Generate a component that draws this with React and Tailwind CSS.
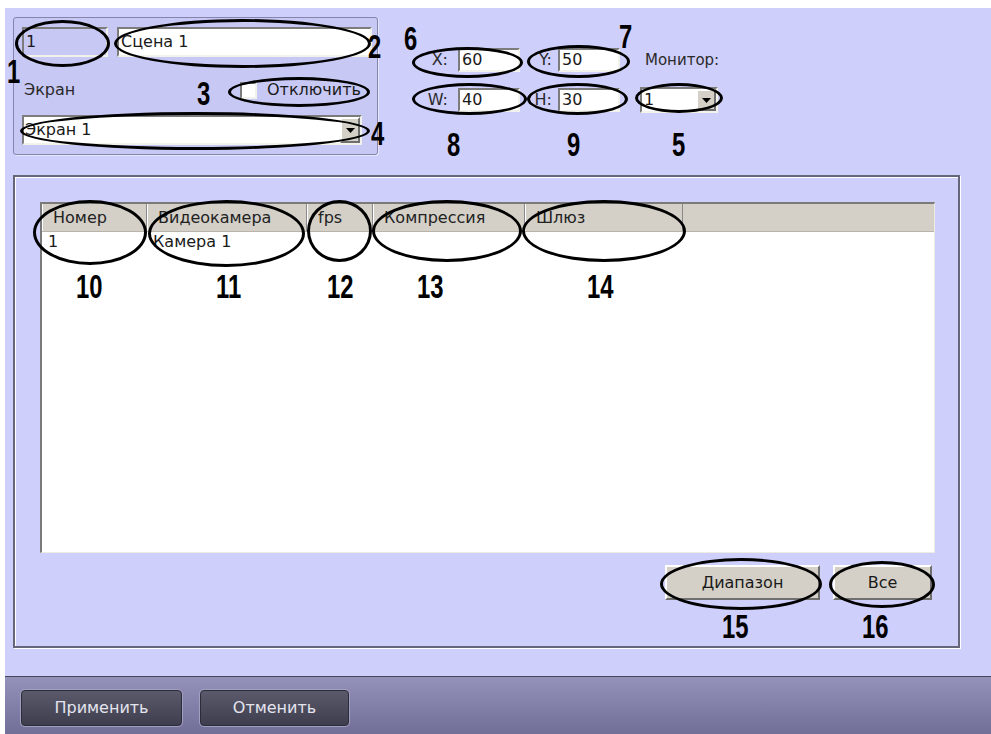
import React from 'react';

// Вкладка "Сцена": поля, таблица камер и пронумерованные выноски поверх
const ui = "font-['DejaVu_Sans',sans-serif] text-[16px] text-[#1a1a1a]";

const sunken =
  'border-2 border-t-[#7c7c7c] border-l-[#7c7c7c] border-b-[#f2f2ec] border-r-[#f2f2ec]';

const raised =
  'border-2 border-t-[#ffffff] border-l-[#ffffff] border-b-[#6f6f6f] border-r-[#6f6f6f] bg-[#d4d0c8]';

const Arrow = () => (
  <div className={`w-[20px] h-full flex items-center justify-center ${raised}`}>
    <svg width="9" height="5" viewBox="0 0 9 5">
      <path d="M0 0h9L4.5 5z" fill="#000" />
    </svg>
  </div>
);

const Ring = ({ className }) => (
  <div className={`absolute border-[3px] border-black rounded-[50%] ${className}`} />
);

const Num = ({ className, children }) => (
  <div
    className={`absolute font-['Liberation_Sans',sans-serif] font-bold text-[34px] leading-none text-black scale-x-[0.7] origin-top-left ${className}`}
  >
    {children}
  </div>
);

const columns = [
  { title: 'Номер', w: 'w-[105px]', value: '1' },
  { title: 'Видеокамера', w: 'w-[160px]', value: 'Камера 1' },
  { title: 'fps', w: 'w-[66px]', value: '' },
  { title: 'Компрессия', w: 'w-[152px]', value: '' },
  { title: 'Шлюз', w: 'w-[158px]', value: '' },
];

export default function App() {
  return (
    <div className={`relative w-[991px] h-[734px] overflow-hidden bg-white pl-[5px] pt-[8px] flex flex-col ${ui}`}>
      <div className="flex-1 bg-[#cfcffb] pl-[8px] pt-[9px] flex flex-col">
        {/* верхняя часть */}
        <div className="flex h-[138px]">
          <div className="w-[365px] h-[138px] border border-[#8484ac] rounded-[3px] bg-[#c8c8f4] pl-[8px] pt-[9px] shadow-[1px_1px_0_#e6e6ff]">
            <div className="flex">
              <div className={`w-[86px] h-[30px] bg-[#c8c8f4] flex items-center pl-[2px] ${sunken}`}>1</div>
              <div className={`ml-[9px] w-[255px] h-[30px] bg-white flex items-center pl-[2px] ${sunken}`}>Сцена 1</div>
            </div>
            <div className="flex items-center h-[24px] mt-[21px]">
              <span className="w-[218px] pl-[2px] text-[#2a2a2a]">Экран</span>
              <div className={`w-[17px] h-[17px] bg-white ${sunken}`} />
              <span className="ml-[10px]">Отключить</span>
            </div>
            <div className={`mt-[13px] w-[340px] h-[30px] bg-white flex items-center ${sunken}`}>
              <span className="flex-1 pl-[1px]">Экран 1</span>
              <Arrow />
            </div>
          </div>

          <div className="ml-[42px] pt-[31px]">
            <div className="flex items-center h-[24px]">
              <span className="w-[30px] pr-[2px] text-right text-[#2a2a2a]">X:</span>
              <div className={`ml-[8px] w-[62px] h-[24px] bg-white flex items-center pl-[2px] ${sunken}`}>60</div>
              <span className="w-[38px] pr-[6px] text-right text-[#2a2a2a]">Y:</span>
              <div className={`w-[62px] h-[24px] bg-white flex items-center pl-[2px] ${sunken}`}>50</div>
              <span className="ml-[25px] text-[15px] text-[#2a2a2a]">Монитор:</span>
            </div>
            <div className="flex items-center h-[24px] mt-[16px]">
              <span className="w-[30px] pr-[2px] text-right text-[#2a2a2a]">W:</span>
              <div className={`ml-[8px] w-[62px] h-[24px] bg-white flex items-center pl-[2px] ${sunken}`}>40</div>
              <span className="w-[38px] pr-[6px] text-right text-[#2a2a2a]">H:</span>
              <div className={`w-[62px] h-[24px] bg-white flex items-center pl-[2px] ${sunken}`}>30</div>
              <div className={`ml-[20px] w-[78px] h-[26px] bg-white flex items-center ${sunken}`}>
                <span className="flex-1 pl-[2px]">1</span>
                <Arrow />
              </div>
            </div>
          </div>
        </div>

        {/* таблица камер */}
        <div className="mt-[20px] w-[947px] h-[473px] border-2 border-[#66667a] shadow-[inset_1px_1px_0_#ffffff,1px_1px_0_#ffffff] pl-[25px] pt-[25px]">
          <div className="w-[895px] h-[351px] bg-white border-t-2 border-l-2 border-[#7a7a7a] border-b border-r border-b-[#ecece4] border-r-[#ecece4] flex flex-col">
            <div className="flex h-[28px] bg-[#d4d0c8] border-b border-[#b8b4ac]">
              {columns.map((c) => (
                <div
                  key={c.title}
                  className={`${c.w} h-full flex items-center pl-[11px] border-r border-[#8a8a8a] shadow-[inset_1px_0_0_#ffffff] text-[#222]`}
                >
                  {c.title}
                </div>
              ))}
              <div className="flex-1" />
            </div>
            <div className="flex h-[19px] items-center">
              {columns.map((c) => (
                <div key={c.title} className={`${c.w} pl-[6px] leading-none`}>
                  {c.value}
                </div>
              ))}
            </div>
          </div>
          <div className="w-[895px] flex justify-end pr-[3px] mt-[12px] gap-[13px]">
            <div className={`w-[155px] h-[35px] flex items-center justify-center ${raised}`}>Диапазон</div>
            <div className={`w-[99px] h-[35px] flex items-center justify-center ${raised}`}>Все</div>
          </div>
        </div>
      </div>

      {/* нижняя панель */}
      <div className="h-[58px] border-t border-[#46465a] bg-gradient-to-b from-[#9492ba] to-[#716f98] flex items-start pt-[13px] pl-[16px] gap-[18px]">
        <div className="w-[161px] h-[36px] rounded-[4px] border border-[#2c2c38] bg-gradient-to-b from-[#5a5a6c] to-[#3e3e4e] flex items-center justify-center text-[#e4e4ee] shadow-[0_0_0_1px_#a0a0c0]">
          Применить
        </div>
        <div className="w-[149px] h-[36px] rounded-[4px] border border-[#2c2c38] bg-gradient-to-b from-[#5a5a6c] to-[#3e3e4e] flex items-center justify-center text-[#e4e4ee] shadow-[0_0_0_1px_#a0a0c0]">
          Отменить
        </div>
      </div>

      {/* выноски */}
      <Ring className="left-[15px] top-[20px] w-[95px] h-[47px]" />
      <Ring className="left-[114px] top-[19px] w-[257px] h-[49px]" />
      <Ring className="left-[228px] top-[77px] w-[142px] h-[30px]" />
      <Ring className="left-[20px] top-[112px] w-[350px] h-[38px]" />
      <Ring className="left-[412px] top-[47px] w-[111px] h-[31px]" />
      <Ring className="left-[527px] top-[45px] w-[103px] h-[33px]" />
      <Ring className="left-[412px] top-[83px] w-[115px] h-[32px]" />
      <Ring className="left-[527px] top-[83px] w-[101px] h-[32px]" />
      <Ring className="left-[635px] top-[83px] w-[88px] h-[30px]" />
      <Ring className="left-[33px] top-[200px] w-[114px] h-[65px]" />
      <Ring className="left-[148px] top-[200px] w-[157px] h-[67px]" />
      <Ring className="left-[307px] top-[200px] w-[65px] h-[62px]" />
      <Ring className="left-[372px] top-[200px] w-[150px] h-[62px]" />
      <Ring className="left-[522px] top-[200px] w-[164px] h-[62px]" />
      <Ring className="left-[660px] top-[558px] w-[162px] h-[52px]" />
      <Ring className="left-[829px] top-[561px] w-[106px] h-[47px]" />

      <Num className="left-[7px] top-[54px]">1</Num>
      <Num className="left-[368px] top-[29px]">2</Num>
      <Num className="left-[197px] top-[76px]">3</Num>
      <Num className="left-[371px] top-[116px]">4</Num>
      <Num className="left-[404px] top-[21px]">6</Num>
      <Num className="left-[619px] top-[19px]">7</Num>
      <Num className="left-[447px] top-[127px]">8</Num>
      <Num className="left-[567px] top-[127px]">9</Num>
      <Num className="left-[672px] top-[127px]">5</Num>
      <Num className="left-[76px] top-[269px]">10</Num>
      <Num className="left-[216px] top-[269px]">11</Num>
      <Num className="left-[327px] top-[269px]">12</Num>
      <Num className="left-[417px] top-[269px]">13</Num>
      <Num className="left-[587px] top-[269px]">14</Num>
      <Num className="left-[722px] top-[609px]">15</Num>
      <Num className="left-[862px] top-[609px]">16</Num>
    </div>
  );
}
